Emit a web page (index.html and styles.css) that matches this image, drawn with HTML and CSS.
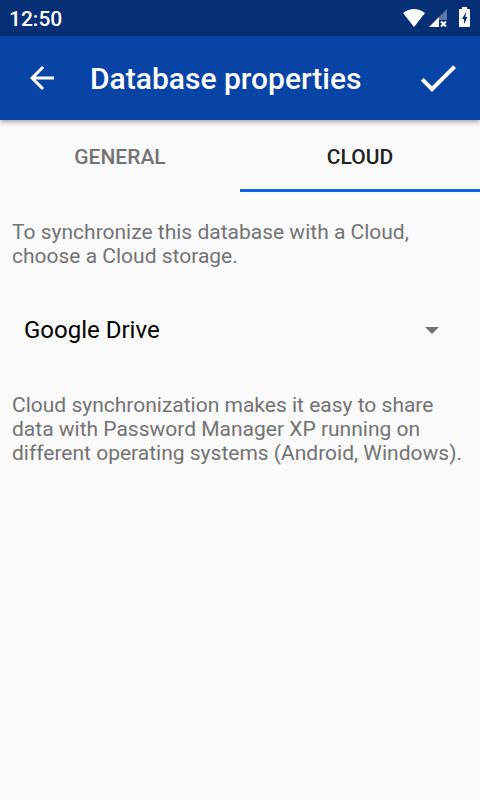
FILE: index.html
```html
<!DOCTYPE html>
<html lang="en">
<head>
<meta charset="utf-8">
<meta name="viewport" content="width=device-width, initial-scale=1">
<title>Database properties</title>
<link rel="stylesheet" href="styles.css">
</head>
<body>
<div class="status-bar">
  <span class="clock">12:50</span>
  <div class="status-icons">
    <svg class="wifi" viewBox="0 0 22 18" aria-hidden="true"><path d="M0 4Q11-4 22 4L11 18Z"/></svg>
    <svg class="signal" viewBox="0 0 18 18" aria-hidden="true"><path class="dim" d="M18 0V11H10V8Z"/><path d="M0 18L10 8V18Z"/><path class="cross" d="M12 12.500L17 17.500M17 12.500L12 17.500"/></svg>
    <svg class="battery" viewBox="0 0 11 20" aria-hidden="true"><path fill-rule="evenodd" d="M3 0H8V2H10Q11 2 11 3V19Q11 20 10 20H1Q0 20 0 19V3Q0 2 1 2H3ZM7 5L3 12H5V17L8.500 10H6.500Z"/></svg>
  </div>
</div>
<header class="app-bar">
  <button class="icon-button" type="button" aria-label="Back">
    <svg class="back" viewBox="0 0 24 24" aria-hidden="true"><path d="M20 11H7.830l5.590-5.590L12 4l-8 8 8 8 1.410-1.410L7.830 13H20v-2z"/></svg>
  </button>
  <h1>Database properties</h1>
  <button class="icon-button" type="button" aria-label="Save">
    <svg class="check" viewBox="0 0 24 24" aria-hidden="true"><path d="M9 16.170L4.830 12l-1.420 1.410L9 19 21 7l-1.410-1.410z"/></svg>
  </button>
</header>
<div class="tabs" role="tablist">
  <button class="tab" type="button" role="tab" aria-selected="false">GENERAL</button>
  <button class="tab selected" type="button" role="tab" aria-selected="true">CLOUD</button>
</div>
<main>
  <label class="note" for="storage">To synchronize this database with a Cloud, choose a Cloud storage.</label>
  <div class="spinner">
    <select id="storage"><option>Google Drive</option></select>
    <svg class="caret" viewBox="0 0 14 7" aria-hidden="true"><path d="M0 0H14L7 7Z"/></svg>
  </div>
  <p class="note">Cloud synchronization makes it easy to share data with Password Manager XP running on different operating systems (Android, Windows).</p>
</main>
</body>
</html>
```
FILE: styles.css
```css
* { box-sizing: border-box; }
body {
  margin: 0;
  background: #fafafa;
  color: #737373;
  font-family: Roboto, "Liberation Sans", sans-serif;
  font-size: 21px;
  line-height: 24px;
}
button, select {
  margin: 0;
  padding: 0;
  border: 0;
  border-radius: 0;
  background: none;
  color: inherit;
  font: inherit;
}
svg { display: block; fill: currentColor; }
.status-bar {
  display: flex;
  align-items: flex-end;
  justify-content: space-between;
  height: 36px;
  padding: 0 10px 5px 9px;
  background: #062f76;
  color: #fff;
  font-weight: 500;
}
.status-icons { display: flex; align-items: flex-end; padding-bottom: 4px; }
.wifi { width: 22px; height: 18px; margin-right: 4px; }
.signal { width: 18px; height: 18px; margin-right: 12px; }
.battery { width: 11px; height: 20px; }
.dim { opacity: .35; }
.cross { fill: none; stroke: currentColor; stroke-width: 2; }
.app-bar {
  display: flex;
  align-items: center;
  height: 84px;
  padding: 0 18px;
  background: #0844a6;
  color: #fff;
  box-shadow: 0 2px 5px rgba(0, 0, 0, .35);
}
.icon-button { display: grid; place-items: center; width: 48px; height: 48px; }
.back { width: 36px; height: 36px; }
.check { width: 48px; height: 48px; }
h1 {
  flex: 1;
  margin: 0;
  padding: 2px 0 0 24px;
  font-size: 30px;
  font-weight: 500;
  line-height: 36px;
}
.tabs { display: flex; height: 72px; }
.tab {
  flex: 1;
  padding-top: 5px;
  border-bottom: 3px solid transparent;
  font-weight: 500;
}
.tab.selected { color: #212121; border-bottom-color: #1262ec; }
main { padding: 28px 12px; }
.note { display: block; margin: 0; }
.spinner { display: grid; align-items: center; margin: 26px 0 27px; }
.spinner > * { grid-area: 1 / 1; }
select {
  appearance: none;
  width: 100%;
  height: 72px;
  padding: 0 48px 0 12px;
  color: #000;
  font-size: 24px;
  line-height: 32px;
}
.caret {
  width: 14px;
  height: 7px;
  margin-right: 29px;
  justify-self: end;
  pointer-events: none;
}
```
